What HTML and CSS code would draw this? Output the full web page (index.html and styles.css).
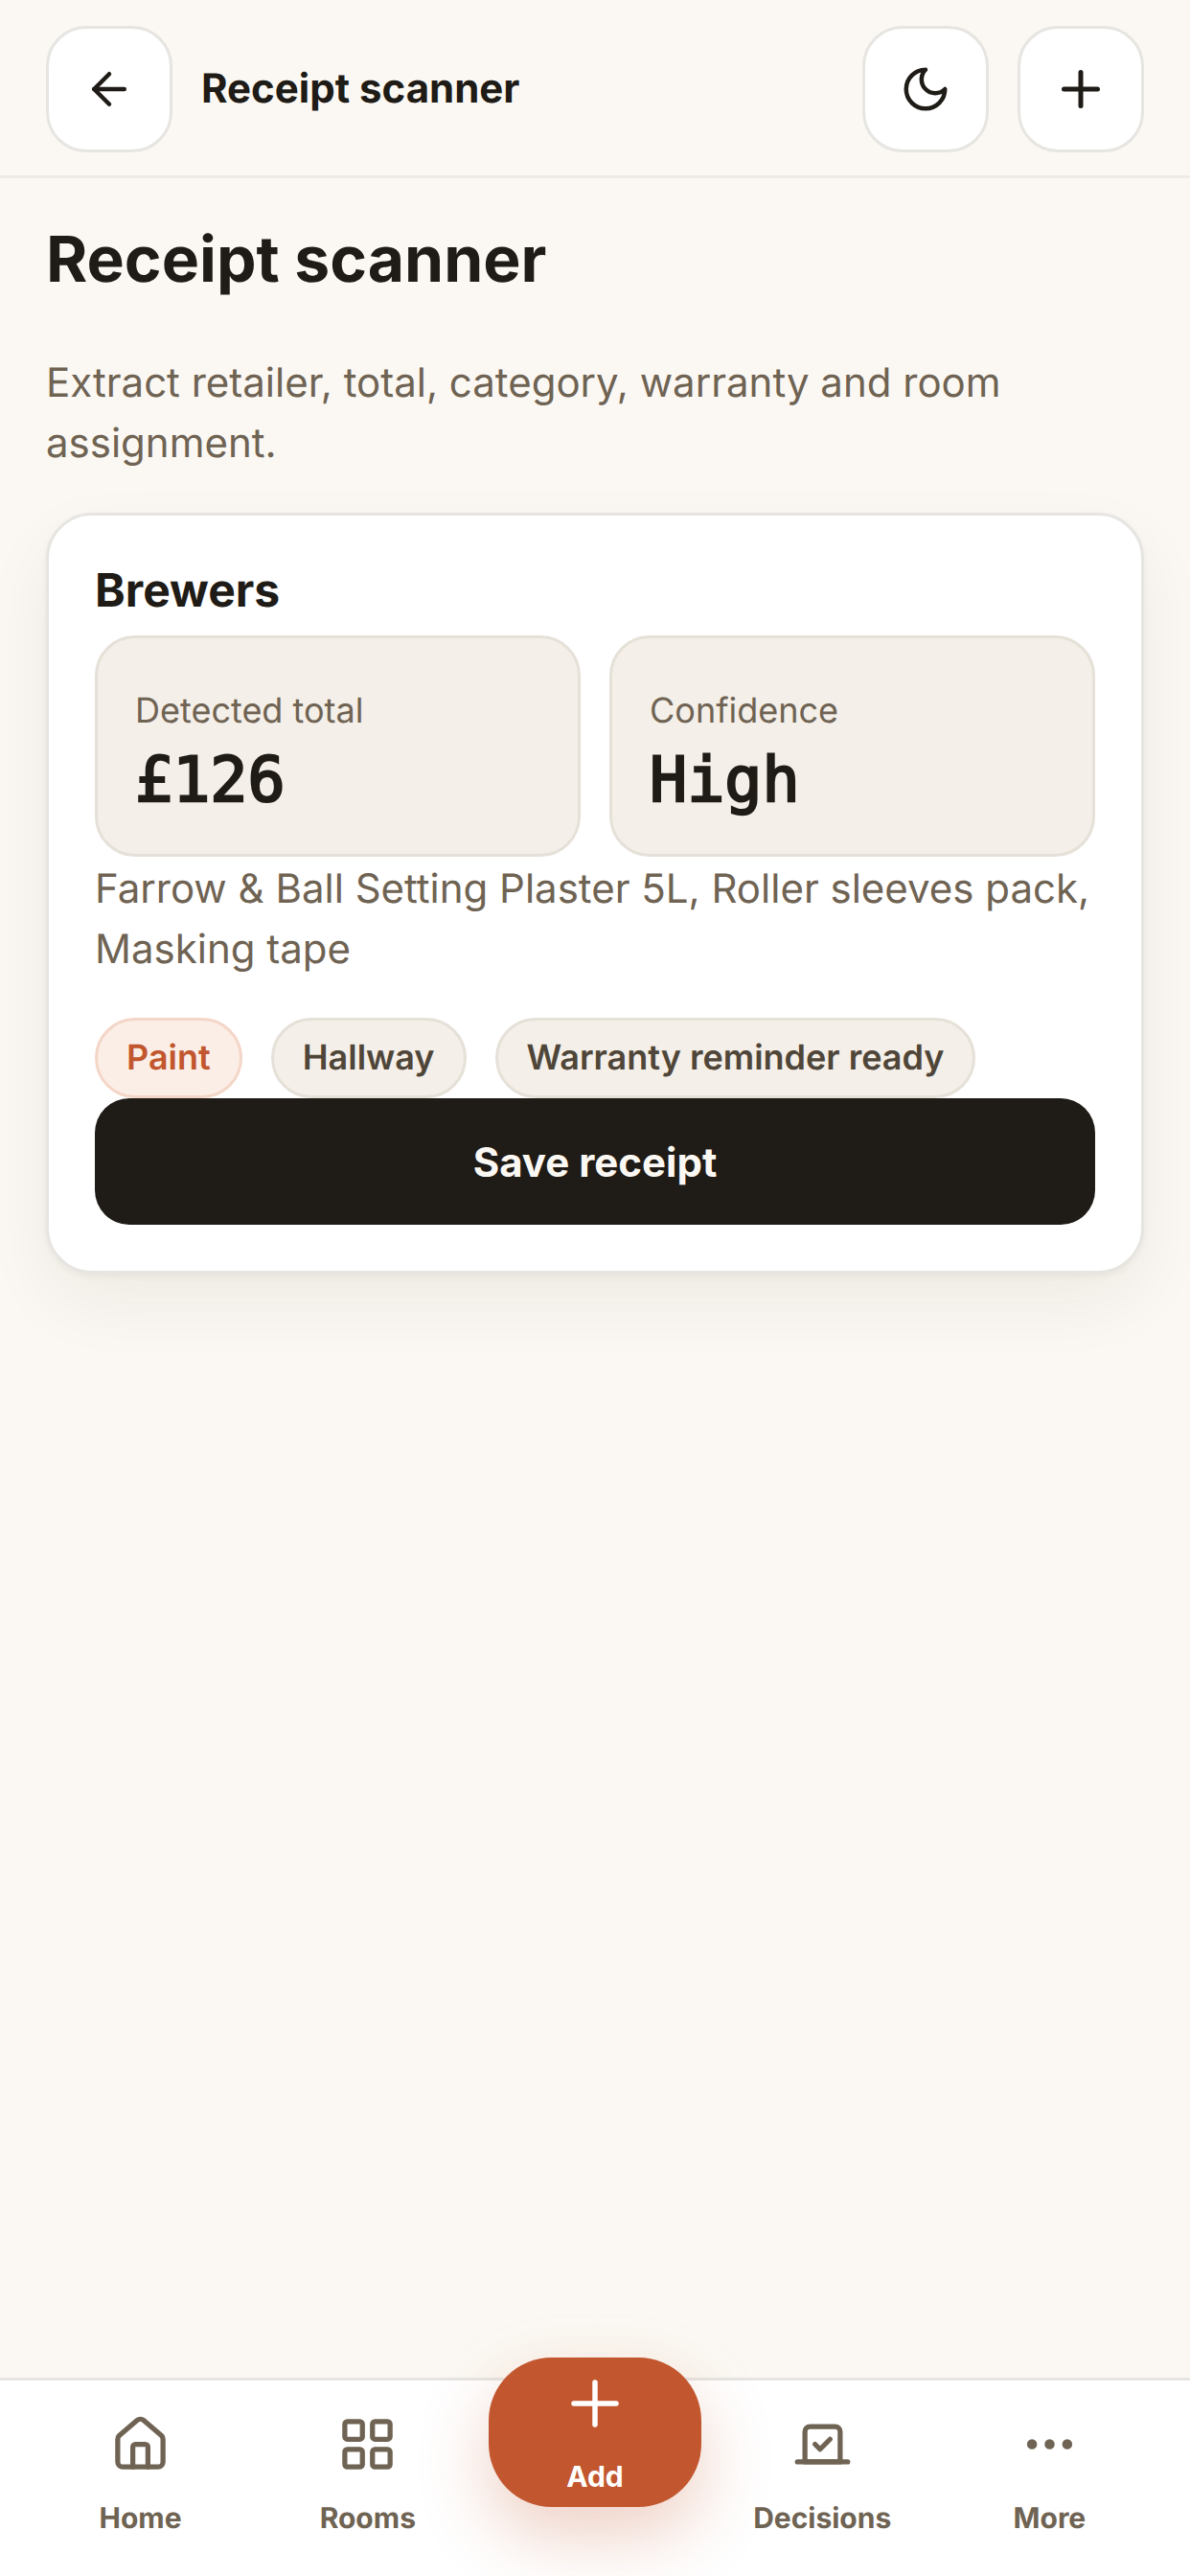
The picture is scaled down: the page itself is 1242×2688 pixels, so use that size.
FILE: index.html
```html
<!DOCTYPE html>
<html lang="en">
<head>
<meta charset="utf-8">
<title>Receipt scanner</title>
<link rel="stylesheet" href="styles.css">
</head>
<body>
<div class="app">
  <header class="topbar">
    <button class="icon-btn" aria-label="Back">
      <svg class="icon" viewBox="0 0 24 24"><path d="M12 19l-7-7 7-7"/><path d="M19 12H5"/></svg>
    </button>
    <div class="topbar-title">Receipt scanner</div>
    <button class="icon-btn" aria-label="Theme">
      <svg class="icon" viewBox="0 0 24 24"><path d="M12 3a6 6 0 0 0 9 9 9 9 0 1 1-9-9Z"/></svg>
    </button>
    <button class="icon-btn" aria-label="Add">
      <svg class="icon icon-plus" viewBox="0 0 24 24"><path d="M12 5v14"/><path d="M5 12h14"/></svg>
    </button>
  </header>
  <main class="content">
    <h1 class="page-title">Receipt scanner</h1>
    <p class="lede">Extract retailer, total, category, warranty and room assignment.</p>
    <section class="card">
      <h2 class="card-title">Brewers</h2>
      <div class="stats">
        <div class="stat">
          <div class="stat-label">Detected total</div>
          <div class="stat-value">£126</div>
        </div>
        <div class="stat">
          <div class="stat-label">Confidence</div>
          <div class="stat-value">High</div>
        </div>
      </div>
      <p class="items">Farrow &amp; Ball Setting Plaster 5L, Roller sleeves pack, Masking tape</p>
      <div class="tags">
        <span class="tag tag-accent">Paint</span>
        <span class="tag">Hallway</span>
        <span class="tag">Warranty reminder ready</span>
      </div>
      <button class="save">Save receipt</button>
    </section>
  </main>
  <nav class="tabbar">
    <a class="tab">
      <svg class="tab-icon" viewBox="0 0 24 24"><path d="M15 21v-8a1 1 0 0 0-1-1h-4a1 1 0 0 0-1 1v8"/><path d="M3 10a2 2 0 0 1 .709-1.528l7-5.999a2 2 0 0 1 2.582 0l7 5.999A2 2 0 0 1 21 10v9a2 2 0 0 1-2 2H5a2 2 0 0 1-2-2z"/></svg>
      <span>Home</span>
    </a>
    <a class="tab">
      <svg class="tab-icon" viewBox="0 0 24 24"><rect x="3" y="3" width="7" height="7" rx="1"/><rect x="14" y="3" width="7" height="7" rx="1"/><rect x="14" y="14" width="7" height="7" rx="1"/><rect x="3" y="14" width="7" height="7" rx="1"/></svg>
      <span>Rooms</span>
    </a>
    <div class="tab-gap"></div>
    <a class="tab">
      <svg class="tab-icon" viewBox="0 0 24 24"><path d="M9 12l2 2 4-4"/><path d="M5 7c0-1.100.9-2 2-2h10a2 2 0 0 1 2 2v12H5V7Z"/><path d="M22 19H2"/></svg>
      <span>Decisions</span>
    </a>
    <a class="tab">
      <svg class="tab-icon" viewBox="0 0 24 24"><circle class="dot" cx="5" cy="12" r="1"/><circle class="dot" cx="12" cy="12" r="1"/><circle class="dot" cx="19" cy="12" r="1"/></svg>
      <span>More</span>
    </a>
    <button class="fab">
      <svg class="fab-icon" viewBox="0 0 24 24"><path d="M12 4v16"/><path d="M4 12h16"/></svg>
      <span>Add</span>
    </button>
  </nav>
</div>
</body>
</html>
```
FILE: styles.css
```css
* { box-sizing: border-box; }
html, body { margin: 0; padding: 0; }
body {
  background: #fbf8f3;
  font-family: Inter, "Liberation Sans", sans-serif;
  color: #1f1b16;
  text-rendering: geometricPrecision;
}
.app {
  width: 1242px;
  height: 2688px;
  display: flex;
  flex-direction: column;
  overflow: hidden;
}
button { font-family: inherit; }

.topbar {
  height: 186px;
  padding: 27px 48px 0;
  display: flex;
  align-items: flex-start;
  gap: 30px;
  border-bottom: 3px solid #eeebe6;
  flex: none;
}
.icon-btn {
  width: 132px;
  height: 132px;
  padding: 0;
  border: 3px solid #e6e5e1;
  border-radius: 42px;
  background: #fff;
  display: flex;
  align-items: center;
  justify-content: center;
  flex: none;
}
.icon {
  width: 54px;
  height: 54px;
  fill: none;
  stroke: #1f1b16;
  stroke-width: 2;
  stroke-linecap: round;
  stroke-linejoin: round;
}
.icon-plus {
  width: 60px;
  height: 60px;
}
.topbar-title {
  flex: 1;
  height: 132px;
  line-height: 132px;
  font-size: 42px;
  font-weight: 700;
}

.content {
  flex: 1;
  padding: 42px 48px 0;
  min-height: 0;
}
.page-title {
  margin: 0;
  font-size: 66px;
  line-height: 84px;
  font-weight: 700;
}
.lede {
  margin: 56px 0 0;
  font-size: 42px;
  line-height: 63px;
  color: #6f6353;
}
.card {
  margin-top: 41px;
  padding: 48px;
  background: #fff;
  border: 3px solid #e6e5e1;
  border-radius: 48px;
  box-shadow: 0 3px 6px rgba(31, 27, 22, 0.05), 0 30px 72px rgba(31, 27, 22, 0.06);
}
.card-title {
  margin: 0;
  font-size: 48px;
  line-height: 60px;
  font-weight: 700;
}
.stats {
  margin-top: 17px;
  display: grid;
  grid-template-columns: 1fr 1fr;
  gap: 30px;
}
.stat {
  height: 231px;
  padding: 53px 39px 0;
  background: #f4efe8;
  border: 3px solid #e6e1d8;
  border-radius: 42px;
}
.stat-label {
  font-size: 36px;
  line-height: 45px;
  color: #6f6353;
}
.stat-value {
  margin-top: 12px;
  font-family: "DejaVu Sans Mono", "Liberation Mono", monospace;
  font-size: 65px;
  line-height: 78px;
  font-weight: 400;
  -webkit-text-stroke: 2.4px #1f1b16;
}
.items {
  margin: 2px 0 0;
  font-size: 42px;
  line-height: 63px;
  color: #6f6353;
}
.tags {
  margin-top: 40px;
  display: flex;
  gap: 30px;
}
.tag {
  height: 84px;
  line-height: 77px;
  padding: 0 30px;
  border: 3px solid #e6e1d8;
  border-radius: 999px;
  background: #f4efe8;
  color: #4f4639;
  font-size: 36px;
  font-weight: 600;
}
.tag-accent {
  background: #fbeee6;
  border-color: #f4d6c8;
  color: #c2562e;
}
.save {
  display: block;
  width: 100%;
  height: 132px;
  border: 0;
  border-radius: 36px;
  background: #1f1b16;
  color: #fbf8f3;
  font-size: 42px;
  font-weight: 700;
}

.tabbar {
  position: relative;
  flex: none;
  height: 207px;
  background: #fff;
  border-top: 3px solid #e6e5e1;
  display: grid;
  grid-template-columns: repeat(5, 1fr);
  padding: 0 28px;
}
.tab {
  display: flex;
  flex-direction: column;
  align-items: center;
  padding-top: 35px;
  color: #6f6353;
  font-size: 30px;
  font-weight: 700;
  line-height: 36px;
}
.tab-icon {
  width: 63px;
  height: 63px;
  margin-bottom: 28px;
  fill: none;
  stroke: #6f6353;
  stroke-width: 2;
  stroke-linecap: round;
  stroke-linejoin: round;
}
.dot { fill: #6f6353; }
.fab {
  position: absolute;
  left: 510px;
  top: -24px;
  width: 222px;
  height: 156px;
  padding: 0;
  border: 0;
  border-radius: 66px;
  background: #c2562e;
  color: #fff;
  display: flex;
  flex-direction: column;
  align-items: center;
  font-size: 30px;
  font-weight: 700;
  line-height: 36px;
  box-shadow: 0 30px 72px rgba(194, 86, 46, 0.28);
}
.fab-icon {
  width: 66px;
  height: 66px;
  margin-top: 15px;
  margin-bottom: 25px;
  fill: none;
  stroke: #fff;
  stroke-width: 2;
  stroke-linecap: round;
}
```
